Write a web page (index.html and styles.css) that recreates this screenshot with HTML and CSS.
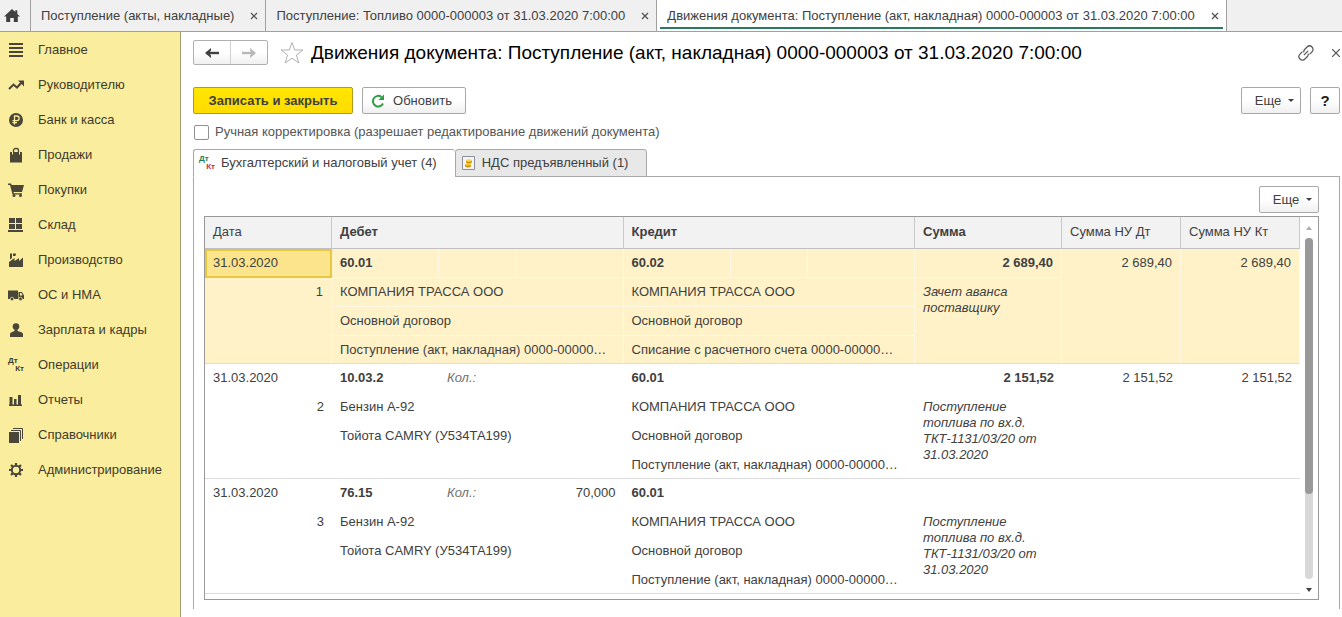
FILE: index.html
```
<!DOCTYPE html>
<html lang="ru">
<head>
    <meta charset="UTF-8">
    <meta name="viewport" content="width=device-width, initial-scale=1.0">
    <title>Движения документа</title>
    <link rel="stylesheet" href="styles.css">
</head>
<body>
    <nav class="window-tabs">
        <a href="#" class="home" aria-label="Начальная страница">
            <svg width="16" height="14" viewBox="0 0 16 14"><path d="M8 0 0 7.500h2.200V13h4V9h3.600v4h4V7.500H16l-2.700-2.600V1.300h-2v1.800z" fill="#404040"/></svg>
        </a>
        <div class="window-tab">
            <a href="#">Поступление (акты, накладные)</a>
            <button type="button" class="close" aria-label="Закрыть"><svg width="8" height="8" viewBox="0 0 8 8"><path d="M1 1l6 6M7 1 1 7"/></svg></button>
        </div>
        <div class="window-tab">
            <a href="#">Поступление: Топливо 0000-000003 от 31.03.2020 7:00:00</a>
            <button type="button" class="close" aria-label="Закрыть"><svg width="8" height="8" viewBox="0 0 8 8"><path d="M1 1l6 6M7 1 1 7"/></svg></button>
        </div>
        <div class="window-tab active">
            <a href="#">Движения документа: Поступление (акт, накладная) 0000-000003 от 31.03.2020 7:00:00</a>
            <button type="button" class="close" aria-label="Закрыть"><svg width="8" height="8" viewBox="0 0 8 8"><path d="M1 1l6 6M7 1 1 7"/></svg></button>
        </div>
    </nav>

    <div class="layout">
        <nav class="sidebar">
            <a href="#">
                <svg width="16" height="16" viewBox="0 0 16 16"><path d="M1 1h14v2H1zM1 5h14v2H1zM1 9h14v2H1zM1 13h14v2H1z"/></svg>
                Главное
            </a>
            <a href="#">
                <svg width="16" height="16" viewBox="0 0 16 16"><path d="M1 12l4.500-4.500 3.500 3L13.500 5.500" fill="none" stroke="#4a4638" stroke-width="2"/><path d="M10 3.500h6v6z"/></svg>
                Руководителю
            </a>
            <a href="#">
                <svg width="16" height="16" viewBox="0 0 16 16"><circle cx="8" cy="8" r="7"/><path d="M6.500 12.500V4h2.300a2.300 2.300 0 0 1 0 4.700H4.500M4.500 10.700h4.500" fill="none" stroke="#fbed9e" stroke-width="1.300"/></svg>
                Банк и касса
            </a>
            <a href="#">
                <svg width="16" height="16" viewBox="0 0 16 16"><path d="M2 5h12v10.500H2z"/><path d="M5.500 8V3.500a2 2 0 0 1 2-2h1a2 2 0 0 1 2 2V8" fill="none" stroke="#4a4638" stroke-width="1.300"/><path d="M4.500 5v2.500M11.500 5v2.500" stroke="#fbed9e"/></svg>
                Продажи
            </a>
            <a href="#">
                <svg width="16" height="16" viewBox="0 0 16 16"><path d="M0 1.500h3l.8 1.500H16l-2 7H5.500l.3 1.200H14v1.300H4.500L2 3H0z"/><circle cx="6" cy="13.500" r="1.500"/><circle cx="12.500" cy="13.500" r="1.500"/></svg>
                Покупки
            </a>
            <a href="#">
                <svg width="16" height="16" viewBox="0 0 16 16"><path d="M1 1h6v5H1zM8 1h6v5H8zM1 7h6v5H1zM8 7h6v5H8zM0 13h15v2H0z"/></svg>
                Склад
            </a>
            <a href="#">
                <svg width="16" height="16" viewBox="0 0 16 16"><path d="M1 15V10l5.500-4v3L11 6v3l4-3.500V15zM2 1.500h2V6L2 7.500zM5 1.500h3L7.500 4H5z"/></svg>
                Производство
            </a>
            <a href="#">
                <svg width="16" height="16" viewBox="0 0 16 16"><path d="M0 3.500h10V12H0zM10.500 5H14l2 3.500V12h-5.500z"/><path d="M12 6h1.500l1 2.500H12z" fill="#fbed9e"/><circle cx="4" cy="12" r="1.800" stroke="#fbed9e" stroke-width=".7"/><circle cx="12.500" cy="12" r="1.800" stroke="#fbed9e" stroke-width=".7"/></svg>
                ОС и НМА
            </a>
            <a href="#">
                <svg width="16" height="16" viewBox="0 0 16 16"><circle cx="8" cy="4.500" r="3.300"/><path d="M6.500 7h3v2l4 1.200q1.500.5 1.500 2V15H2v-2.800q0-1.500 1.500-2l3-1.200z"/></svg>
                Зарплата и кадры
            </a>
            <a href="#">
                <span class="dtkt"><span>Дт</span><span>Кт</span></span>
                Операции
            </a>
            <a href="#">
                <svg width="16" height="16" viewBox="0 0 16 16"><path d="M1.500 5h3v8h-3zM6 7h2.500v6H6zM10 3h3v10h-3zM1 12.500h13V14H1z"/></svg>
                Отчеты
            </a>
            <a href="#">
                <svg width="16" height="16" viewBox="0 0 16 16"><path d="M1 5h10v11H1z"/><path d="M3 3.500h9.500V14M5 1.500h9.500V12" fill="none" stroke="#4a4638"/></svg>
                Справочники
            </a>
            <a href="#">
                <svg width="16" height="16" viewBox="0 0 16 16"><circle cx="8" cy="8" r="4.200" fill="none" stroke="#4a4638" stroke-width="2"/><path d="M8 1v2.500M8 12.500V15M1 8h2.500M12.500 8H15M3 3l1.800 1.800M11.200 11.200 13 13M13 3l-1.800 1.800M4.800 11.200 3 13" stroke="#4a4638" stroke-width="2.200"/></svg>
                Администрирование
            </a>
        </nav>

        <main class="content">
            <header class="title-bar">
                <div class="history">
                    <button type="button" aria-label="Назад"><svg width="14" height="10" viewBox="0 0 14 10"><path d="M1 5h13" stroke="#404040" stroke-width="2.400"/><path d="M0 5 6 0v2.500L4 5l2 2.500V10z" fill="#404040"/></svg></button>
                    <button type="button" aria-label="Вперед"><svg width="14" height="10" viewBox="0 0 14 10"><path d="M0 5h13" stroke="#b8b8b8" stroke-width="2.400"/><path d="M14 5 8 0v2.500L10 5 8 7.500V10z" fill="#b8b8b8"/></svg></button>
                </div>
                <button type="button" class="icon-button" aria-label="В избранное"><svg width="24" height="22" viewBox="0 0 24 22"><path d="M12 .5l2.700 7.500H23l-6.600 5 2.400 8-6.800-4.800L5.200 21l2.400-8L1 8h8.300z" fill="#fff" stroke="#b0b0b0"/></svg></button>
                <h1>Движения документа: Поступление (акт, накладная) 0000-000003 от 31.03.2020 7:00:00</h1>
                <button type="button" class="icon-button link" aria-label="Получить ссылку"><svg width="18" height="18" viewBox="0 0 18 18"><g fill="none" stroke="#555" stroke-width="1.200" transform="rotate(-45 9 9)"><path d="M7.500 5.500H4a3.500 3.500 0 0 0 0 7h3.500q1.500 0 2.500-1.500M10.500 12.500H14a3.500 3.500 0 0 0 0-7h-3.500Q9 5.500 8 7M6 9h6"/></g></svg></button>
                <button type="button" class="close" aria-label="Закрыть"><svg width="8" height="8" viewBox="0 0 8 8"><path d="M0 0l8 8M8 0 0 8"/></svg></button>
            </header>

            <div class="command-bar">
                <button type="button" class="btn btn-primary">Записать и закрыть</button>
                <button type="button" class="btn btn-refresh">
                    <svg width="14" height="14" viewBox="0 0 14 14"><path d="M12 9.500A5.300 5.300 0 1 1 10.500 3" fill="none" stroke="#2f9e44" stroke-width="2"/><path d="M13 .5v5.500H7.500z" fill="#2f9e44"/></svg>
                    Обновить
                </button>
                <button type="button" class="btn btn-more">Еще <span class="caret"></span></button>
                <button type="button" class="btn btn-help">?</button>
            </div>

            <div class="manual">
                <input type="checkbox" id="manual">
                <label for="manual">Ручная корректировка (разрешает редактирование движений документа)</label>
            </div>

            <div class="page-tabs">
                <button type="button" class="page-tab active"><span class="dtkt color"><span>Дт</span><span>Кт</span></span>Бухгалтерский и налоговый учет (4)</button>
                <button type="button" class="page-tab">
                    <svg width="13" height="14" viewBox="0 0 13 14"><path d="M.5.5h12v13H.5z" fill="#f4f4f4" stroke="#8a8f9a"/><path d="M3 8.500v2q3 2 6 0v-2z" fill="#c98f10"/><ellipse cx="6" cy="8.500" rx="3" ry="1.300" fill="#f6c92c"/><path d="M4 4.500v2q3 2 6 0v-2z" fill="#c98f10"/><ellipse cx="7" cy="4.500" rx="3" ry="1.300" fill="#f9d94a"/></svg>
                    НДС предъявленный (1)
                </button>
            </div>

            <section class="panel">
                <div class="panel-bar">
                    <button type="button" class="btn btn-more">Еще <span class="caret"></span></button>
                </div>

                <div class="grid">
                    <div class="records">
                        <table>
                            <colgroup>
                                <col class="c-date">
                                <col class="c-account"><col class="c-label"><col>
                                <col class="c-account"><col class="c-label"><col>
                                <col class="c-sum">
                                <col class="c-tax"><col class="c-tax">
                            </colgroup>
                            <thead>
                                <tr>
                                    <th>Дата</th>
                                    <th class="bold" colspan="3">Дебет</th>
                                    <th class="bold" colspan="3">Кредит</th>
                                    <th class="bold">Сумма</th>
                                    <th>Сумма НУ Дт</th>
                                    <th>Сумма НУ Кт</th>
                                </tr>
                            </thead>
                            <tbody class="selected">
                                <tr>
                                    <td class="current">31.03.2020</td>
                                    <td class="bold">60.01</td><td></td><td></td>
                                    <td class="bold">60.02</td><td></td><td></td>
                                    <td class="bold num">2 689,40</td>
                                    <td class="num" rowspan="4">2 689,40</td>
                                    <td class="num" rowspan="4">2 689,40</td>
                                </tr>
                                <tr>
                                    <td class="num" rowspan="3">1</td>
                                    <td colspan="3">КОМПАНИЯ ТРАССА ООО</td>
                                    <td colspan="3">КОМПАНИЯ ТРАССА ООО</td>
                                    <td class="note" rowspan="3">Зачет аванса поставщику</td>
                                </tr>
                                <tr>
                                    <td colspan="3">Основной договор</td>
                                    <td colspan="3">Основной договор</td>
                                </tr>
                                <tr>
                                    <td colspan="3">Поступление (акт, накладная) 0000-00000…</td>
                                    <td colspan="3">Списание с расчетного счета 0000-00000…</td>
                                </tr>
                            </tbody>
                            <tbody>
                                <tr>
                                    <td>31.03.2020</td>
                                    <td class="bold">10.03.2</td><td class="hint">Кол.:</td><td></td>
                                    <td class="bold">60.01</td><td></td><td></td>
                                    <td class="bold num">2 151,52</td>
                                    <td class="num" rowspan="4">2 151,52</td>
                                    <td class="num" rowspan="4">2 151,52</td>
                                </tr>
                                <tr>
                                    <td class="num" rowspan="3">2</td>
                                    <td colspan="3">Бензин А-92</td>
                                    <td colspan="3">КОМПАНИЯ ТРАССА ООО</td>
                                    <td class="note" rowspan="3">Поступление топлива по вх.д. ТКТ-1131/03/20 от 31.03.2020</td>
                                </tr>
                                <tr>
                                    <td colspan="3">Тойота CAMRY (У534ТА199)</td>
                                    <td colspan="3">Основной договор</td>
                                </tr>
                                <tr>
                                    <td colspan="3"></td>
                                    <td colspan="3">Поступление (акт, накладная) 0000-00000…</td>
                                </tr>
                            </tbody>
                            <tbody>
                                <tr>
                                    <td>31.03.2020</td>
                                    <td class="bold">76.15</td><td class="hint">Кол.:</td><td class="num">70,000</td>
                                    <td class="bold">60.01</td><td></td><td></td>
                                    <td></td>
                                    <td rowspan="4"></td>
                                    <td rowspan="4"></td>
                                </tr>
                                <tr>
                                    <td class="num" rowspan="3">3</td>
                                    <td colspan="3">Бензин А-92</td>
                                    <td colspan="3">КОМПАНИЯ ТРАССА ООО</td>
                                    <td class="note" rowspan="3">Поступление топлива по вх.д. ТКТ-1131/03/20 от 31.03.2020</td>
                                </tr>
                                <tr>
                                    <td colspan="3">Тойота CAMRY (У534ТА199)</td>
                                    <td colspan="3">Основной договор</td>
                                </tr>
                                <tr>
                                    <td colspan="3"></td>
                                    <td colspan="3">Поступление (акт, накладная) 0000-00000…</td>
                                </tr>
                            </tbody>
                        </table>
                    </div>
                    <div class="scrollbar">
                        <span class="arrow up"></span>
                        <div class="track"><div class="thumb"></div></div>
                        <span class="arrow down"></span>
                    </div>
                </div>
            </section>
        </main>
    </div>
</body>
</html>
```
FILE: styles.css
```
* {
    box-sizing: border-box;
}
body {
    margin: 0;
    min-height: 100vh;
    display: flex;
    flex-direction: column;
    font-family: "Liberation Sans", Arial, sans-serif;
    font-size: 13px;
    line-height: 16px;
    color: #404040;
    background-color: #fff;
}
a {
    color: inherit;
    text-decoration: none;
}
button {
    font: inherit;
    color: inherit;
    padding: 0;
    border: none;
    background: none;
    cursor: pointer;
}
svg {
    display: block;
    flex: none;
}

/* Открытые окна */
.window-tabs {
    display: flex;
    height: 32px;
    background-color: #f0f0f0;
    border-bottom: 1px solid #a0a0a0;
}
.home {
    display: flex;
    align-items: center;
    justify-content: center;
    width: 31px;
    padding-right: 7px;
    border-right: 1px solid #a0a0a0;
}
.window-tab {
    display: flex;
    align-items: center;
    gap: 16px;
    padding: 0 7px 0 10px;
    border-right: 1px solid #a0a0a0;
    white-space: nowrap;
}
.window-tab.active {
    position: relative;
    background-color: #fff;
}
.window-tab.active::after {
    content: "";
    position: absolute;
    left: 3px;
    right: 3px;
    bottom: 2px;
    height: 2px;
    background-color: #2a7a5c;
}
.close svg {
    fill: none;
    stroke: #505050;
    stroke-width: 1.2;
}

.layout {
    display: flex;
    flex: 1;
}

/* Разделы */
.sidebar {
    flex: none;
    width: 181px;
    background-color: #fbed9e;
    border-right: 1px solid #a39c78;
}
.sidebar a {
    display: flex;
    align-items: center;
    gap: 14px;
    height: 35px;
    padding-left: 8px;
    color: #403c2c;
}
.sidebar svg {
    fill: #4a4638;
}
.dtkt {
    display: flex;
    flex-direction: column;
    align-items: flex-start;
    flex: none;
    width: 16px;
    font-size: 8px;
    line-height: 8px;
    font-weight: bold;
}
.dtkt span:last-child {
    align-self: flex-end;
}
.dtkt.color span:first-child {
    color: #16805a;
}
.dtkt.color span:last-child {
    color: #c0303c;
}

.content {
    flex: 1;
    min-width: 0;
    display: flex;
    flex-direction: column;
    padding: 8px 2px 8px 12px;
}
.title-bar {
    display: flex;
    align-items: center;
    height: 25px;
}
.title-bar h1 {
    flex: 1;
    margin: 0 0 0 7px;
    font-size: 19px;
    line-height: 24px;
    font-weight: normal;
    color: #000;
    white-space: nowrap;
}
.history {
    display: flex;
    width: 75px;
    height: 25px;
    margin-right: 12px;
    border: 1px solid #b0b0b0;
    border-radius: 2px;
    background: linear-gradient(#fff 50%, #f0f0f0);
}
.history button {
    display: flex;
    align-items: center;
    justify-content: center;
    flex: 1;
}
.history button + button {
    border-left: 1px solid #d0d0d0;
}
.link {
    margin-right: 17px;
}

.command-bar {
    display: flex;
    gap: 9px;
    margin-top: 22px;
}
.btn {
    display: flex;
    align-items: center;
    justify-content: center;
    height: 27px;
    border: 1px solid #a8a8a8;
    border-radius: 2px;
    background: linear-gradient(#fff 50%, #f0f0f0);
}
.btn-primary {
    width: 160px;
    border-color: #b09a20;
    background: linear-gradient(#ffe600, #ffdc00);
    font-weight: bold;
}
.btn-refresh {
    gap: 8px;
    width: 104px;
    padding-right: 5px;
}
.btn-more {
    gap: 7px;
    width: 60px;
    padding-left: 7px;
    margin-left: auto;
}
.btn-help {
    width: 30px;
    font-size: 15px;
    font-weight: bold;
    color: #202020;
}
.caret {
    border: 3px solid transparent;
    border-top-color: #404040;
    border-bottom: none;
}

.manual {
    display: flex;
    align-items: center;
    gap: 6px;
    margin: 10px 0 9px;
    color: #555;
}
.manual input {
    appearance: none;
    width: 15px;
    height: 15px;
    margin: 0 0 0 1px;
    border: 1px solid #909090;
    border-radius: 2px;
    background-color: #fff;
}
.manual input:checked {
    background-color: #ffe000;
}

/* Вкладки и панель */
.page-tabs {
    display: flex;
}
.page-tab {
    position: relative;
    display: flex;
    align-items: center;
    gap: 7px;
    height: 28px;
    padding: 0 18px 0 6px;
    border: 1px solid #a8a8a8;
    border-radius: 3px 3px 0 0;
    background-color: #e8e8e8;
    margin-bottom: -1px;
}
.page-tab.active {
    gap: 6px;
    padding-left: 5px;
    border-right: none;
    border-bottom-color: #fff;
    background-color: #fff;
}
.panel {
    flex: 1;
    padding: 9px 20px 8px 10px;
    border: 1px solid #a8a8a8;
    border-bottom: none;
}
.panel-bar {
    display: flex;
    margin-bottom: 3px;
}

.grid {
    display: flex;
    padding-bottom: 5px;
    border: 1px solid #999;
}
.records {
    flex: 1;
    min-width: 0;
}
table {
    width: 100%;
    table-layout: fixed;
    border-collapse: separate;
    border-spacing: 0;
}
.c-date {
    width: 127px;
}
.c-account {
    width: 107px;
}
.c-label {
    width: 77px;
}
.c-sum {
    width: 147px;
}
.c-tax {
    width: 119px;
}
th {
    height: 32px;
    padding: 0 8px 2px;
    text-align: left;
    font-weight: normal;
    background-color: #f2f2f2;
    border-right: 1px solid #c8c8c8;
    border-bottom: 1px solid #c0c0c0;
}
td {
    height: 29px;
    padding: 6px 8px 5px;
    vertical-align: top;
    white-space: nowrap;
    overflow: hidden;
    text-overflow: ellipsis;
}
.bold {
    font-weight: bold;
}
.num {
    text-align: right;
}
.hint {
    font-style: italic;
    color: #707070;
}
td.note {
    white-space: normal;
    font-style: italic;
}
tbody tr:last-child td {
    height: 28px;
}
.selected td {
    background-color: #fff2c8;
    border-right: 1px solid #fff9e4;
    border-bottom: 1px solid #fff9e4;
}
tbody tr:last-child td,
tbody td[rowspan] {
    border-bottom: 1px solid #dcdcdc;
}
.selected td.current {
    padding: 4px 6px 3px;
    border: 2px solid #e8c840;
    background-color: #fce48c;
}

.scrollbar {
    display: flex;
    flex-direction: column;
    align-items: center;
    flex: none;
    width: 18px;
    padding: 9px 0 2px;
}
.track {
    flex: 1;
    width: 8px;
    margin: 8px 0 9px;
    border-radius: 4px;
    background-color: #d8d8d8;
}
.thumb {
    height: 75%;
    border-radius: 4px;
    background-color: #999;
}
.arrow {
    border: 3px solid transparent;
}
.up {
    border-top: none;
    border-bottom: 4px solid #b0b0b0;
}
.down {
    border-bottom: none;
    border-top: 4px solid #404040;
}
```
